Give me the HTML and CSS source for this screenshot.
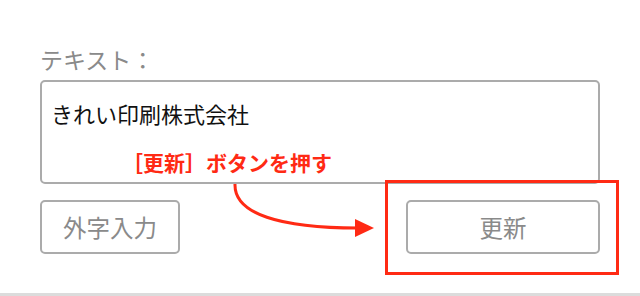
FILE: index.html
```html
<!DOCTYPE html>
<html lang="ja">
<head>
<meta charset="utf-8">
<link rel="stylesheet" href="styles.css">
</head>
<body>
<div class="stage">
  <div class="form">
    <div class="label">テキスト：</div>
    <div class="textbox">きれい印刷株式会社</div>
    <div class="buttons">
      <div class="btn btn-gaiji">外字入力</div>
      <div class="btn btn-update">更新</div>
    </div>
  </div>
  <div class="note">［更新］ボタンを押す</div>
  <svg class="arrow" width="640" height="296" viewBox="0 0 640 296">
    <path d="M235 184 C 234 214, 280 228, 358 228" fill="none" stroke="#ff2a14" stroke-width="3"/>
    <polygon points="355,219 374,228 355,237" fill="#ff2a14"/>
  </svg>
  <div class="highlight"></div>
</div>
</body>
</html>
```

FILE: styles.css
```css
html, body {
  margin: 0;
  padding: 0;
  background: #fff;
}
body {
  font-family: "Noto Sans CJK JP", "Noto Sans", sans-serif;
}
.stage {
  position: relative;
  width: 640px;
  height: 296px;
  box-sizing: border-box;
  border-bottom: 3px solid #dcdcdc;
  overflow: hidden;
}
.form {
  padding: 44px 40px 0 40px;
}
.label {
  font-size: 23px;
  line-height: 30px;
  color: #8a8a8a;
  margin-bottom: 6px;
}
.textbox {
  box-sizing: border-box;
  width: 560px;
  height: 104px;
  border: 2px solid #ababab;
  border-radius: 5px;
  padding: 16px 9px 0 9px;
  font-size: 22px;
  line-height: 30px;
  color: #111;
}
.buttons {
  display: flex;
  justify-content: space-between;
  width: 560px;
  margin-top: 16px;
}
.btn {
  box-sizing: border-box;
  height: 54px;
  border: 2px solid #ababab;
  border-radius: 5px;
  display: flex;
  align-items: center;
  justify-content: center;
  font-size: 23.5px;
  color: #8a8a8a;
}
.btn-gaiji {
  width: 140px;
}
.btn-update {
  width: 194px;
}
.note {
  position: absolute;
  left: 122px;
  top: 147px;
  font-size: 21px;
  line-height: 30px;
  font-weight: bold;
  color: #ff2a14;
  white-space: nowrap;
}
.arrow {
  position: absolute;
  left: 0;
  top: 0;
}
.highlight {
  position: absolute;
  left: 385px;
  top: 180px;
  width: 234px;
  height: 95px;
  box-sizing: border-box;
  border: 3px solid #ff2a14;
}
```
